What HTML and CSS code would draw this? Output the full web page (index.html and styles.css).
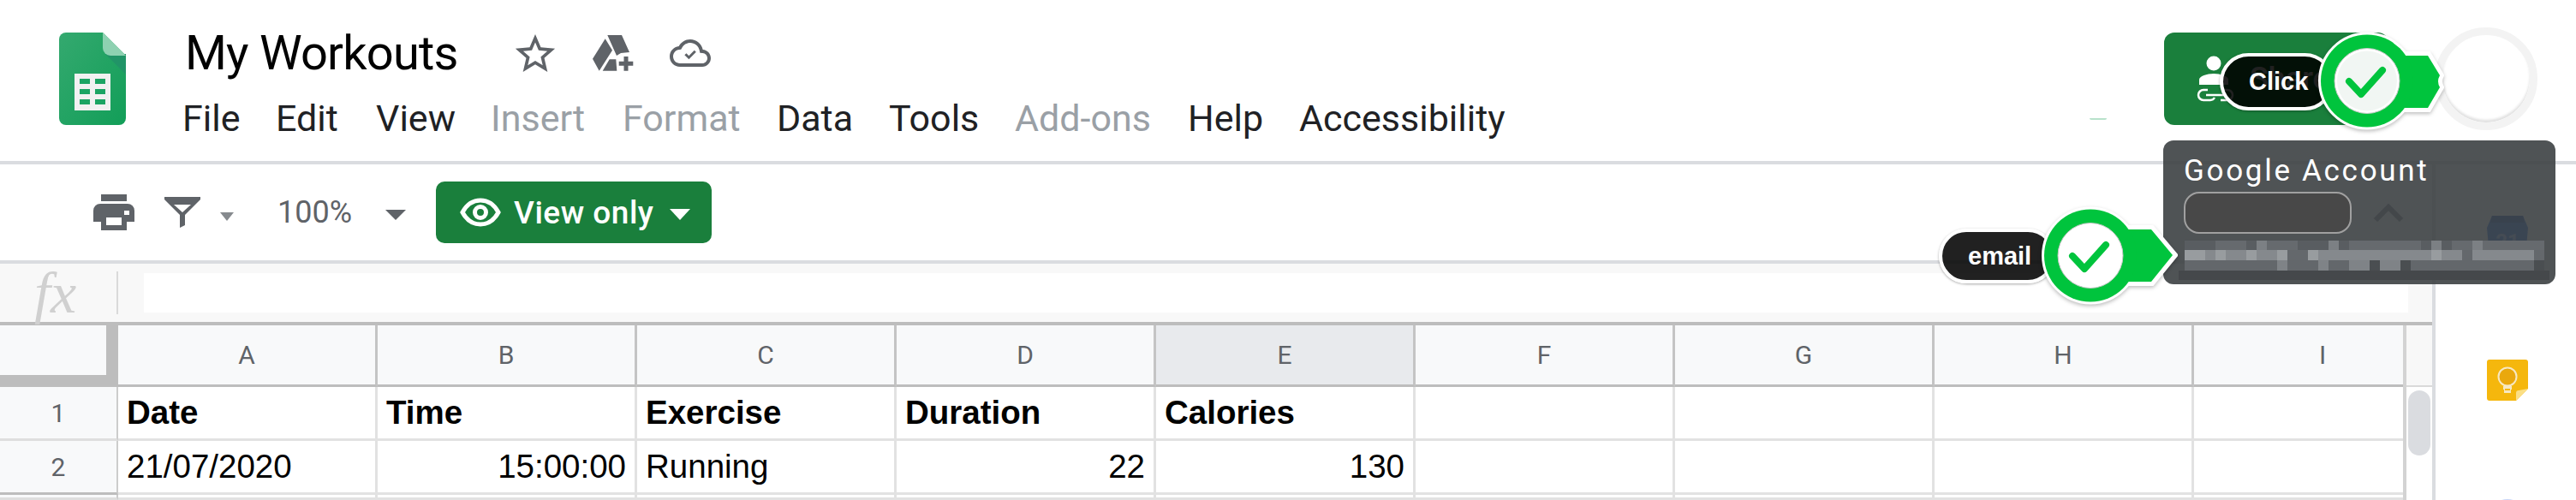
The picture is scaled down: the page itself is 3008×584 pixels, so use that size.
FILE: index.html
```html
<!DOCTYPE html>
<html lang="en">
<head>
    <meta charset="UTF-8">
    <title>My Workouts</title>
    <link rel="stylesheet" href="styles.css">
</head>
<body>
    <header class="header">
        <svg class="sheet-logo" viewBox="0 0 78 108">
            <defs>
                <linearGradient id="sheetGreen" x1="0" y1="0" x2="1" y2="1">
                    <stop offset="0" stop-color="#34a96f"/>
                    <stop offset="1" stop-color="#129e58"/>
                </linearGradient>
            </defs>
            <path d="M8 0h43l27 27v73a8 8 0 0 1-8 8H8a8 8 0 0 1-8-8V8a8 8 0 0 1 8-8z" fill="url(#sheetGreen)"/>
            <path d="M54 25h24v24z" fill="#219467"/>
            <path d="M51 0l27 27H60a9 9 0 0 1-9-9z" fill="#8ed1b1"/>
            <path d="M18 48h42v43H18z" fill="#f1f1f1"/>
            <path d="M24 54h12v6H24zM42 54h12v6H42zM24 66h12v6H24zM42 66h12v6H42zM24 78h12v6H24zM42 78h12v6H42z" fill="#1ba463"/>
        </svg>
        <div class="doc-info">
            <div class="title-row">
                <span class="doc-title">My Workouts</span>
                <svg class="icon-star" viewBox="2 2 20 19"><path d="M22 9.24l-7.19-.62L12 2 9.19 8.63 2 9.24l5.46 4.73L5.82 21 12 17.27 18.18 21l-1.63-7.03L22 9.24zM12 15.4l-3.76 2.27 1-4.28-3.32-2.88 4.38-.38L12 6.1l1.71 4.04 4.38.38-3.32 2.88 1 4.28L12 15.4z"/></svg>
                <svg class="icon-drive" viewBox="0 0 48 42">
                    <path d="M17.3 0H34l9 20-10 1-5 3zM14.7 4.3L23 17.700 7.700 41.700 0 27.700zM19.700 28.300h7.600l1 13.400H11.700zM36.500 25h5v5.800h5.800v5h-5.800v5.900h-5v-5.900h-5.800v-5h5.800z"/>
                </svg>
                <svg class="icon-cloud" viewBox="0 4 24 16">
                    <path d="M19.350 10.040C18.670 6.590 15.640 4 12 4 9.110 4 6.600 5.640 5.350 8.040 2.340 8.360 0 10.910 0 14c0 3.310 2.690 6 6 6h13c2.760 0 5-2.240 5-5 0-2.640-2.050-4.780-4.650-4.960zM19 18H6c-2.210 0-4-1.790-4-4 0-2.050 1.530-3.760 3.560-3.970l1.070-.11.5-.95C8.080 7.140 9.940 6 12 6c2.620 0 4.880 1.860 5.390 4.430l.3 1.500 1.530.11c1.560.1 2.780 1.410 2.780 2.960 0 1.650-1.350 3-3 3z"/>
                    <path class="cloud-check" d="M9.200 12.600l2 2 3.700-3.700"/>
                </svg>
            </div>
            <nav class="menu">
                <span class="m-file">File</span>
                <span class="m-edit">Edit</span>
                <span class="m-view">View</span>
                <span class="m-insert off">Insert</span>
                <span class="m-format off">Format</span>
                <span class="m-data">Data</span>
                <span class="m-tools">Tools</span>
                <span class="m-addons off">Add-ons</span>
                <span class="m-help">Help</span>
                <span>Accessibility</span>
            </nav>
        </div>
        <div class="share-btn">
            <svg class="share-icon" viewBox="0 0 44 54">
                <circle cx="20" cy="9" r="8.500" fill="#fff"/>
                <path d="M3 34v-6c0-4 9-7 17-7s17 3 17 7v6z" fill="#fff"/>
                <path class="share-link" d="M13 40H8a6 6 0 0 0 0 12h8a6 6 0 0 0 5-3M11 46h22M31 40h5a6 6 0 0 1 0 12h-8"/>
            </svg>
            <span>Share</span>
        </div>
        <div class="avatar"></div>
    </header>

    <div class="main">
        <div class="work">
            <div class="toolbar">
                <svg class="icon-print" viewBox="0 0 48 42">
                    <path d="M9 0h30v8H9z"/>
                    <path fill-rule="evenodd" d="M8 11h32a8 8 0 0 1 8 8v13h-9v10H9V32H0V19a8 8 0 0 1 8-8zM15 27v9h18v-9zM36 19v5h6v-5z"/>
                </svg>
                <svg class="icon-filter" viewBox="0 0 42 36">
                    <path fill-rule="evenodd" d="M0 0h42v3L24 21v12l-6 3V21L0 3zM11 9l10 9 10-9z"/>
                </svg>
                <span class="caret caret-small"></span>
                <span class="zoom-value">100%</span>
                <span class="caret caret-zoom"></span>
                <div class="view-btn">
                    <svg class="icon-eye" viewBox="0 0 48 34">
                        <path d="M3 17C9 6 17 3 24 3s15 3 21 14c-6 11-14 14-21 14S9 28 3 17z"/>
                        <circle cx="24" cy="17" r="6.500"/>
                    </svg>
                    <span>View only</span>
                    <span class="caret caret-white"></span>
                </div>
            </div>

            <div class="formula-bar">
                <span class="fx">fx</span>
                <span class="fx-sep"></span>
                <div class="formula-input"></div>
            </div>

            <div class="sheet">
                <div class="grid">
                    <div class="corner"></div>
                    <div class="col-head">A</div>
                    <div class="col-head">B</div>
                    <div class="col-head">C</div>
                    <div class="col-head">D</div>
                    <div class="col-head selected">E</div>
                    <div class="col-head">F</div>
                    <div class="col-head">G</div>
                    <div class="col-head">H</div>
                    <div class="col-head">I</div>

                    <div class="row-head">1</div>
                    <div class="cell bold">Date</div>
                    <div class="cell bold">Time</div>
                    <div class="cell bold">Exercise</div>
                    <div class="cell bold">Duration</div>
                    <div class="cell bold">Calories</div>
                    <div class="cell"></div>
                    <div class="cell"></div>
                    <div class="cell"></div>
                    <div class="cell"></div>

                    <div class="row-head dark">2</div>
                    <div class="cell">21/07/2020</div>
                    <div class="cell num">15:00:00</div>
                    <div class="cell">Running</div>
                    <div class="cell num">22</div>
                    <div class="cell num">130</div>
                    <div class="cell"></div>
                    <div class="cell"></div>
                    <div class="cell"></div>
                    <div class="cell"></div>

                    <div class="row-head"></div>
                    <div class="cell"></div>
                    <div class="cell"></div>
                    <div class="cell"></div>
                    <div class="cell"></div>
                    <div class="cell"></div>
                    <div class="cell"></div>
                    <div class="cell"></div>
                    <div class="cell"></div>
                    <div class="cell"></div>
                </div>
                <div class="scrollbar">
                    <div class="scroll-top"></div>
                    <div class="scroll-thumb"></div>
                </div>
            </div>
        </div>

        <aside class="side-panel">
            <svg class="side-icon" viewBox="0 0 48 48">
                <path d="M6 0h36l6 14-3 34H3L0 14z" fill="#2f6ee0"/>
                <path d="M6 0h36l2 8H4z" fill="#1e4fb0"/>
                <text x="24" y="38" text-anchor="middle" class="cal-day">21</text>
            </svg>
            <svg class="side-icon" viewBox="0 0 48 48">
                <path d="M3 0h42a3 3 0 0 1 3 3v31L34 48H3a3 3 0 0 1-3-3V3a3 3 0 0 1 3-3z" fill="#f5b70d"/>
                <path d="M48 34L34 48V39a3 3 0 0 1 3-3z" fill="#fbdf85"/>
                <circle cx="24" cy="20" r="10.500" fill="#eaa80d" stroke="#f7e8c2" stroke-width="2"/>
                <path d="M19 31h10v4h-1v4h-8v-4h-1z" fill="#f7e8c2"/>
                <path d="M21 34h6v2h-6z" fill="#f5b70d"/>
            </svg>
            <svg class="side-icon side-tasks" viewBox="0 0 48 48"><circle cx="24" cy="24" r="24" fill="#c6d4f7"/></svg>
        </aside>
    </div>

    <span class="smudge"></span>

    <!-- account tooltip + the two tutorial markers sit over the page -->
    <div class="account-tip">
        <div class="account-title">Google Account</div>
        <div class="account-row">
            <div class="account-name"></div>
            <svg class="account-chevron" viewBox="0 0 36 22"><path d="M3 19L18 4l15 15"/></svg>
        </div>
        <svg class="account-blur" viewBox="0 0 433 46">
            <path d="M0 35h433v11H0z" fill="#45484b"/>
            <path d="M7 0h420v11H7z" fill="#666a6e"/>
            <g fill="#595d61"><path d="M7 0h36v11H7zM79 0h24v11H79zM139 0h36v11h-36zM187 0h12v11h-12zM283 0h36v11h-36z"/></g>
            <g fill="#7c8084"><path d="M91 0h12v11H91zM175 0h12v11h-12zM295 0h12v11h-12zM343 0h12v11h-12z"/></g>
            <path d="M7 11h420v12H7z" fill="#85898d"/>
            <g fill="#989c9f"><path d="M7 11h24v12H7zM43 11h12v12H43zM79 11h12v12H79zM115 11h12v12h-12zM151 11h12v12h-12zM295 11h12v12h-12z"/></g>
            <g fill="#64686c"><path d="M127 11h24v12h-24zM331 11h12v12h-12zM415 11h12v12h-12z"/></g>
            <path d="M7 23h420v12H7z" fill="#63676b"/>
            <g fill="#7f8387"><path d="M115 23h12v12h-12zM163 23h12v12h-12zM199 23h24v12h-24zM235 23h24v12h-24z"/></g>
            <g fill="#4a4e51"><path d="M223 23h12v12h-12zM259 23h12v12h-12zM415 23h12v12h-12z"/></g>
        </svg>
    </div>

    <div class="hint hint-click">
        <div class="hint-pill">Click</div>
        <svg class="hint-marker" viewBox="0 0 148 116">
            <path class="marker-edge" d="M95 26h35l15 25q-4 7 0 14l-15 26H95z"/>
            <circle class="marker-edge" cx="58" cy="57.500" r="54"/>
            <path class="marker-fill" d="M95 28h34l14 23q-4 7 0 14l-14 24H95z"/>
            <circle class="marker-fill" cx="58" cy="57.500" r="54"/>
            <circle class="marker-ring" cx="58" cy="57.500" r="38"/>
            <circle class="marker-face" cx="58" cy="57.500" r="35"/>
            <path class="marker-check" d="M37 58l14 15 25-28"/>
        </svg>
    </div>

    <div class="hint hint-email">
        <div class="hint-pill">email</div>
        <svg class="hint-marker" viewBox="0 0 160 116">
            <path class="marker-edge" d="M95 25h35l27 32-27 33H95z"/>
            <circle class="marker-edge" cx="58" cy="57.500" r="54"/>
            <path class="marker-fill" d="M95 27h34l25 30-25 31H95z"/>
            <circle class="marker-fill" cx="58" cy="57.500" r="54"/>
            <circle class="marker-ring" cx="58" cy="57.500" r="38"/>
            <circle class="marker-white" cx="58" cy="57.500" r="35"/>
            <path class="marker-check" d="M37 58l14 15 25-28"/>
        </svg>
    </div>
</body>
</html>
```

FILE: styles.css
```css
* {
    box-sizing: border-box;
}

html, body {
    margin: 0;
    padding: 0;
}

body {
    position: relative;
    width: 3008px;
    height: 584px;
    overflow: hidden;
    background: #fff;
    color: #000;
    font-family: 'Roboto', sans-serif;
}

/* top bar */
.header {
    display: flex;
    height: 192px;
    padding: 38px 45px 0 69px;
    border-bottom: 4px solid #dadce0;
}

.sheet-logo {
    width: 78px;
    height: 108px;
    flex: none;
}

.doc-info {
    margin-left: 66px;
}

.title-row {
    display: flex;
    align-items: center;
    height: 48px;
}

.doc-title {
    margin-left: 3px;
    font-size: 56px;
    letter-spacing: -0.800px;
    line-height: 48px;
}

.title-row svg {
    fill: #5f6368;
    flex: none;
}

.icon-star {
    width: 48px;
    height: 44px;
    margin-left: 66px;
}

.icon-drive {
    width: 48px;
    height: 42px;
    margin-left: 43px;
}

.icon-cloud {
    width: 48px;
    height: 32px;
    margin-left: 42px;
}

.cloud-check {
    fill: none;
    stroke: #5f6368;
    stroke-width: 1.500;
}

.menu {
    display: flex;
    margin-top: 28px;
    font-size: 43px;
    line-height: 48px;
    color: #202124;
}

.menu span {
    flex: none;
}

.menu .off {
    color: #9aa0a6;
}

.m-file { width: 109px; }
.m-edit { width: 117px; }
.m-view { width: 134px; }
.m-insert { width: 154px; }
.m-format { width: 180px; }
.m-data { width: 131px; }
.m-tools { width: 147px; }
.m-addons { width: 202px; }
.m-help { width: 130px; }

.share-btn {
    display: flex;
    align-items: center;
    width: 262px;
    height: 108px;
    margin-left: auto;
    padding-left: 38px;
    background: #1a7f3c;
    border-radius: 12px;
    color: #fff;
    font-size: 36px;
    font-weight: 500;
}

.share-icon {
    width: 44px;
    height: 54px;
    margin-right: 18px;
    flex: none;
}

.share-link {
    fill: none;
    stroke: #fff;
    stroke-width: 2.500;
}

.avatar {
    width: 120px;
    height: 120px;
    margin: -6px 0 0 54px;
    background: #fff;
    border: 9px solid #f3f3f3;
    border-radius: 50%;
    box-shadow: inset 0 -3px 3px rgba(0, 0, 0, 0.12);
}

.main {
    display: flex;
    height: 392px;
    overflow: hidden;
}

.work {
    width: 2840px;
    flex: none;
}

/* toolbar */
.toolbar {
    display: flex;
    align-items: center;
    height: 112px;
    padding-left: 109px;
}

.icon-print {
    width: 48px;
    height: 42px;
    fill: #5f6368;
}

.icon-filter {
    width: 42px;
    height: 36px;
    margin-left: 35px;
    fill: #5f6368;
}

.caret {
    width: 0;
    height: 0;
    border-style: solid;
    border-color: #5f6368 transparent transparent;
}

.caret-small {
    margin: 10px 0 0 23px;
    border-width: 10px 8px 0;
    border-top-color: #868a8e;
}

.zoom-value {
    width: 88px;
    margin-left: 51px;
    font-size: 36px;
    color: #5f6368;
}

.caret-zoom {
    margin: 6px 0 0 38px;
    border-width: 12px 12px 0;
}

.view-btn {
    display: flex;
    align-items: center;
    width: 322px;
    height: 72px;
    margin-left: 35px;
    padding-left: 28px;
    background: #1a7f3c;
    border-radius: 10px;
    color: #fff;
    font-size: 37px;
    font-weight: 500;
    letter-spacing: 0.500px;
}

.icon-eye {
    width: 48px;
    height: 34px;
    margin-right: 15px;
    fill: none;
    stroke: #fff;
    stroke-width: 5;
}

.caret-white {
    margin: 4px 0 0 19px;
    border-width: 13px 12px 0;
    border-top-color: #fff;
}

/* formula bar */
.formula-bar {
    display: flex;
    align-items: center;
    height: 72px;
    padding-right: 28px;
    background: #f8f8f8;
    border-top: 4px solid #dadce0;
}

.fx {
    width: 136px;
    padding-left: 40px;
    font-family: 'Liberation Serif', serif;
    font-style: italic;
    font-size: 68px;
    line-height: 60px;
    color: #d0d0d0;
}

.fx-sep {
    width: 2px;
    height: 50px;
    background: #dadada;
    flex: none;
}

.formula-input {
    flex: 1;
    height: 46px;
    margin-left: 30px;
    background: #fff;
}

/* spreadsheet */
.sheet {
    display: flex;
    height: 208px;
    border-top: 4px solid #bdbdbd;
}

.grid {
    display: grid;
    grid-template-columns: 138px repeat(9, 303px);
    grid-template-rows: 72px 63px 63px 6px;
    width: 2810px;
    overflow: hidden;
    border-right: 4px solid #d3d3d3;
    font-family: 'Liberation Sans', sans-serif;
}

.corner {
    background: #f8f9fa;
    border-right: 14px solid #bdbdbd;
    border-bottom: 14px solid #bdbdbd;
}

.col-head {
    display: flex;
    align-items: center;
    justify-content: center;
    background: #f8f9fa;
    border-right: 3px solid #c4c4c4;
    border-bottom: 3px solid #bdbdbd;
    color: #5f6368;
    font-family: 'Roboto', sans-serif;
    font-size: 30px;
}

.col-head.selected {
    background: #e8eaed;
}

.row-head {
    display: flex;
    align-items: center;
    justify-content: center;
    background: #f8f9fa;
    border-right: 2px solid #ccc;
    border-bottom: 3px solid #dedede;
    color: #5f6368;
    font-family: 'Roboto', sans-serif;
    font-size: 30px;
}

.row-head.dark {
    border-bottom-color: #bdbdbd;
}

.cell {
    display: flex;
    align-items: center;
    padding: 0 10px;
    border-right: 3px solid #e2e2e2;
    border-bottom: 3px solid #e2e2e2;
    font-size: 38.500px;
    white-space: nowrap;
}

.cell.bold {
    font-weight: bold;
}

.cell.num {
    justify-content: flex-end;
}

.scrollbar {
    width: 30px;
    flex: none;
}

.scroll-top {
    height: 72px;
    background: #f8f8f8;
    border-bottom: 2px solid #dadada;
}

.scroll-thumb {
    width: 26px;
    height: 76px;
    margin: 4px 0 0 2px;
    background: #dadce0;
    border-radius: 13px;
}

/* right side panel */
.side-panel {
    flex: 1;
    padding: 60px 0 0 60px;
    border-left: 4px solid #dadce0;
}

.side-icon {
    display: block;
    width: 48px;
    height: 48px;
    margin-bottom: 120px;
}

.side-tasks {
    margin-top: -5px;
}

.cal-day {
    font-family: 'Roboto', sans-serif;
    font-size: 24px;
    font-weight: bold;
    fill: #9bb6ee;
}

.smudge {
    position: absolute;
    left: 2440px;
    top: 138px;
    width: 20px;
    height: 2px;
    background: #b8e2cb;
    border-radius: 0 0 10px 10px;
}

/* overlays */
.account-tip {
    position: absolute;
    left: 2526px;
    top: 164px;
    width: 458px;
    height: 168px;
    background: rgba(60, 64, 67, 0.9);
    border-radius: 12px;
    color: #fff;
}

.account-title {
    margin: 16px 0 0 24px;
    font-size: 35px;
    letter-spacing: 2.700px;
    line-height: 40px;
}

.account-row {
    display: flex;
    align-items: center;
    margin: 4px 0 0 24px;
}

.account-name {
    width: 196px;
    height: 49px;
    background: #484848;
    border: 2px solid #a0a0a0;
    border-radius: 18px;
}

.account-chevron {
    width: 36px;
    height: 22px;
    margin-left: 25px;
    fill: none;
    stroke: #43474a;
    stroke-width: 6;
}

.account-blur {
    position: absolute;
    left: 18px;
    top: 117px;
    width: 433px;
    height: 46px;
}

.hint {
    position: absolute;
    display: flex;
    align-items: center;
}

.hint-click {
    left: 2592px;
    top: 37px;
}

.hint-email {
    left: 2264px;
    top: 241px;
}

.hint-pill {
    display: flex;
    align-items: center;
    padding-left: 30px;
    background: rgba(0, 0, 0, 0.87);
    border: 4px solid #fff;
    border-radius: 34px;
    box-shadow: 0 1px 3px rgba(0, 0, 0, 0.35);
    color: #fff;
    font-family: 'Liberation Sans', sans-serif;
    font-size: 29px;
    font-weight: bold;
}

.hint-click .hint-pill {
    width: 133px;
    height: 67px;
}

.hint-email .hint-pill {
    width: 136px;
    height: 64px;
}

.hint-marker {
    height: 116px;
    filter: drop-shadow(0 2px 2px rgba(0, 0, 0, 0.25));
}

.hint-click .hint-marker {
    width: 148px;
    margin-left: -19px;
}

.hint-email .hint-marker {
    width: 160px;
    margin-left: -17px;
}

.marker-edge {
    fill: #fff;
    stroke: #fff;
    stroke-width: 6;
}

.marker-fill {
    fill: #00c43d;
}

.marker-ring {
    fill: #fff;
    stroke: #c8c8c8;
    stroke-width: 1;
}

.marker-face {
    fill: #f1f6f3;
}

.marker-white {
    fill: #fff;
}

.marker-check {
    fill: none;
    stroke: #00c43d;
    stroke-width: 8;
    stroke-linecap: round;
    stroke-linejoin: round;
}
```
